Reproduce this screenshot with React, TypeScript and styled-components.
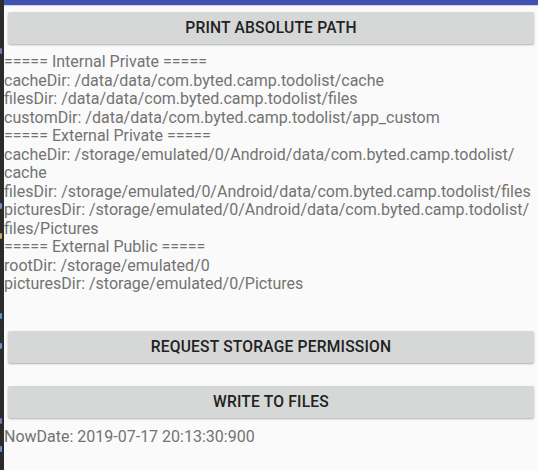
import React from "react";
import styled, { createGlobalStyle } from "styled-components";

const Global = createGlobalStyle`
  html, body { margin: 0; padding: 0; background: #fafafa; }
  body { width: 538px; height: 470px; overflow: hidden; font-family: Roboto, "Liberation Sans", sans-serif; }
`;

const Frame = styled.div`
  display: flex;
  width: 538px;
  height: 470px;
`;

const EditorStrip = styled.div`
  width: 4px;
  flex: none;
  background: #2b2b2b;
  position: relative;
`;

const Mark = styled.span<{ $top: number; $color: string }>`
  position: absolute;
  left: 0;
  top: ${(p) => p.$top}px;
  width: 2px;
  height: 6px;
  border-radius: 1px;
  background: ${(p) => p.$color};
`;

const Screen = styled.div`
  flex: 1;
  display: flex;
  flex-direction: column;
  background: #fafafa;
`;

const AppBar = styled.div`
  height: 5px;
  background: #3f51b5;
  box-shadow: 0 1px 1px rgba(0, 0, 0, 0.15);
`;

const Button = styled.div<{ $mt: number }>`
  margin: ${(p) => p.$mt}px 4px 0 4px;
  height: 32px;
  background: #d6d7d7;
  border-radius: 2px;
  box-shadow: 0 1px 2px rgba(0, 0, 0, 0.3);
  display: flex;
  align-items: center;
  justify-content: center;
  font-family: Roboto, "Liberation Sans", sans-serif;
  font-weight: 500;
  font-size: 15.6px;
  color: #222222;
  letter-spacing: 0.2px;
  text-transform: uppercase;
`;

const Log = styled.div<{ $mt: number }>`
  margin-top: ${(p) => p.$mt}px;
  display: flex;
  flex-direction: column;
  font-size: 16px;
  line-height: 18.5px;
  color: #737373;
  white-space: nowrap;
`;

const Line = styled.div``;

const lines = [
  "===== Internal Private =====",
  "cacheDir: /data/data/com.byted.camp.todolist/cache",
  "filesDir: /data/data/com.byted.camp.todolist/files",
  "customDir: /data/data/com.byted.camp.todolist/app_custom",
  "===== External Private =====",
  "cacheDir: /storage/emulated/0/Android/data/com.byted.camp.todolist/",
  "cache",
  "filesDir: /storage/emulated/0/Android/data/com.byted.camp.todolist/files",
  "picturesDir: /storage/emulated/0/Android/data/com.byted.camp.todolist/",
  "files/Pictures",
  "===== External Public =====",
  "rootDir: /storage/emulated/0",
  "picturesDir: /storage/emulated/0/Pictures",
];

export default function App() {
  return (
    <Frame>
      <Global />
      <EditorStrip>
        <Mark $top={48} $color="#8a6fb0" />
        <Mark $top={203} $color="#6a8fd0" />
        <Mark $top={233} $color="#c9a86a" />
        <Mark $top={313} $color="#6a8fd0" />
        <Mark $top={343} $color="#6a8fd0" />
        <Mark $top={418} $color="#8a6fb0" />
        <Mark $top={446} $color="#6a8fd0" />
      </EditorStrip>
      <Screen>
        <AppBar />
        <Button $mt={7}>Print Absolute Path</Button>
        <Log $mt={9}>
          {lines.map((l, i) => (
            <Line key={i}>{l}</Line>
          ))}
        </Log>
        <Button $mt={37}>Request Storage Permission</Button>
        <Button $mt={23}>Write to Files</Button>
        <Log $mt={10}>
          <Line>NowDate: 2019-07-17 20:13:30:900</Line>
        </Log>
      </Screen>
    </Frame>
  );
}
